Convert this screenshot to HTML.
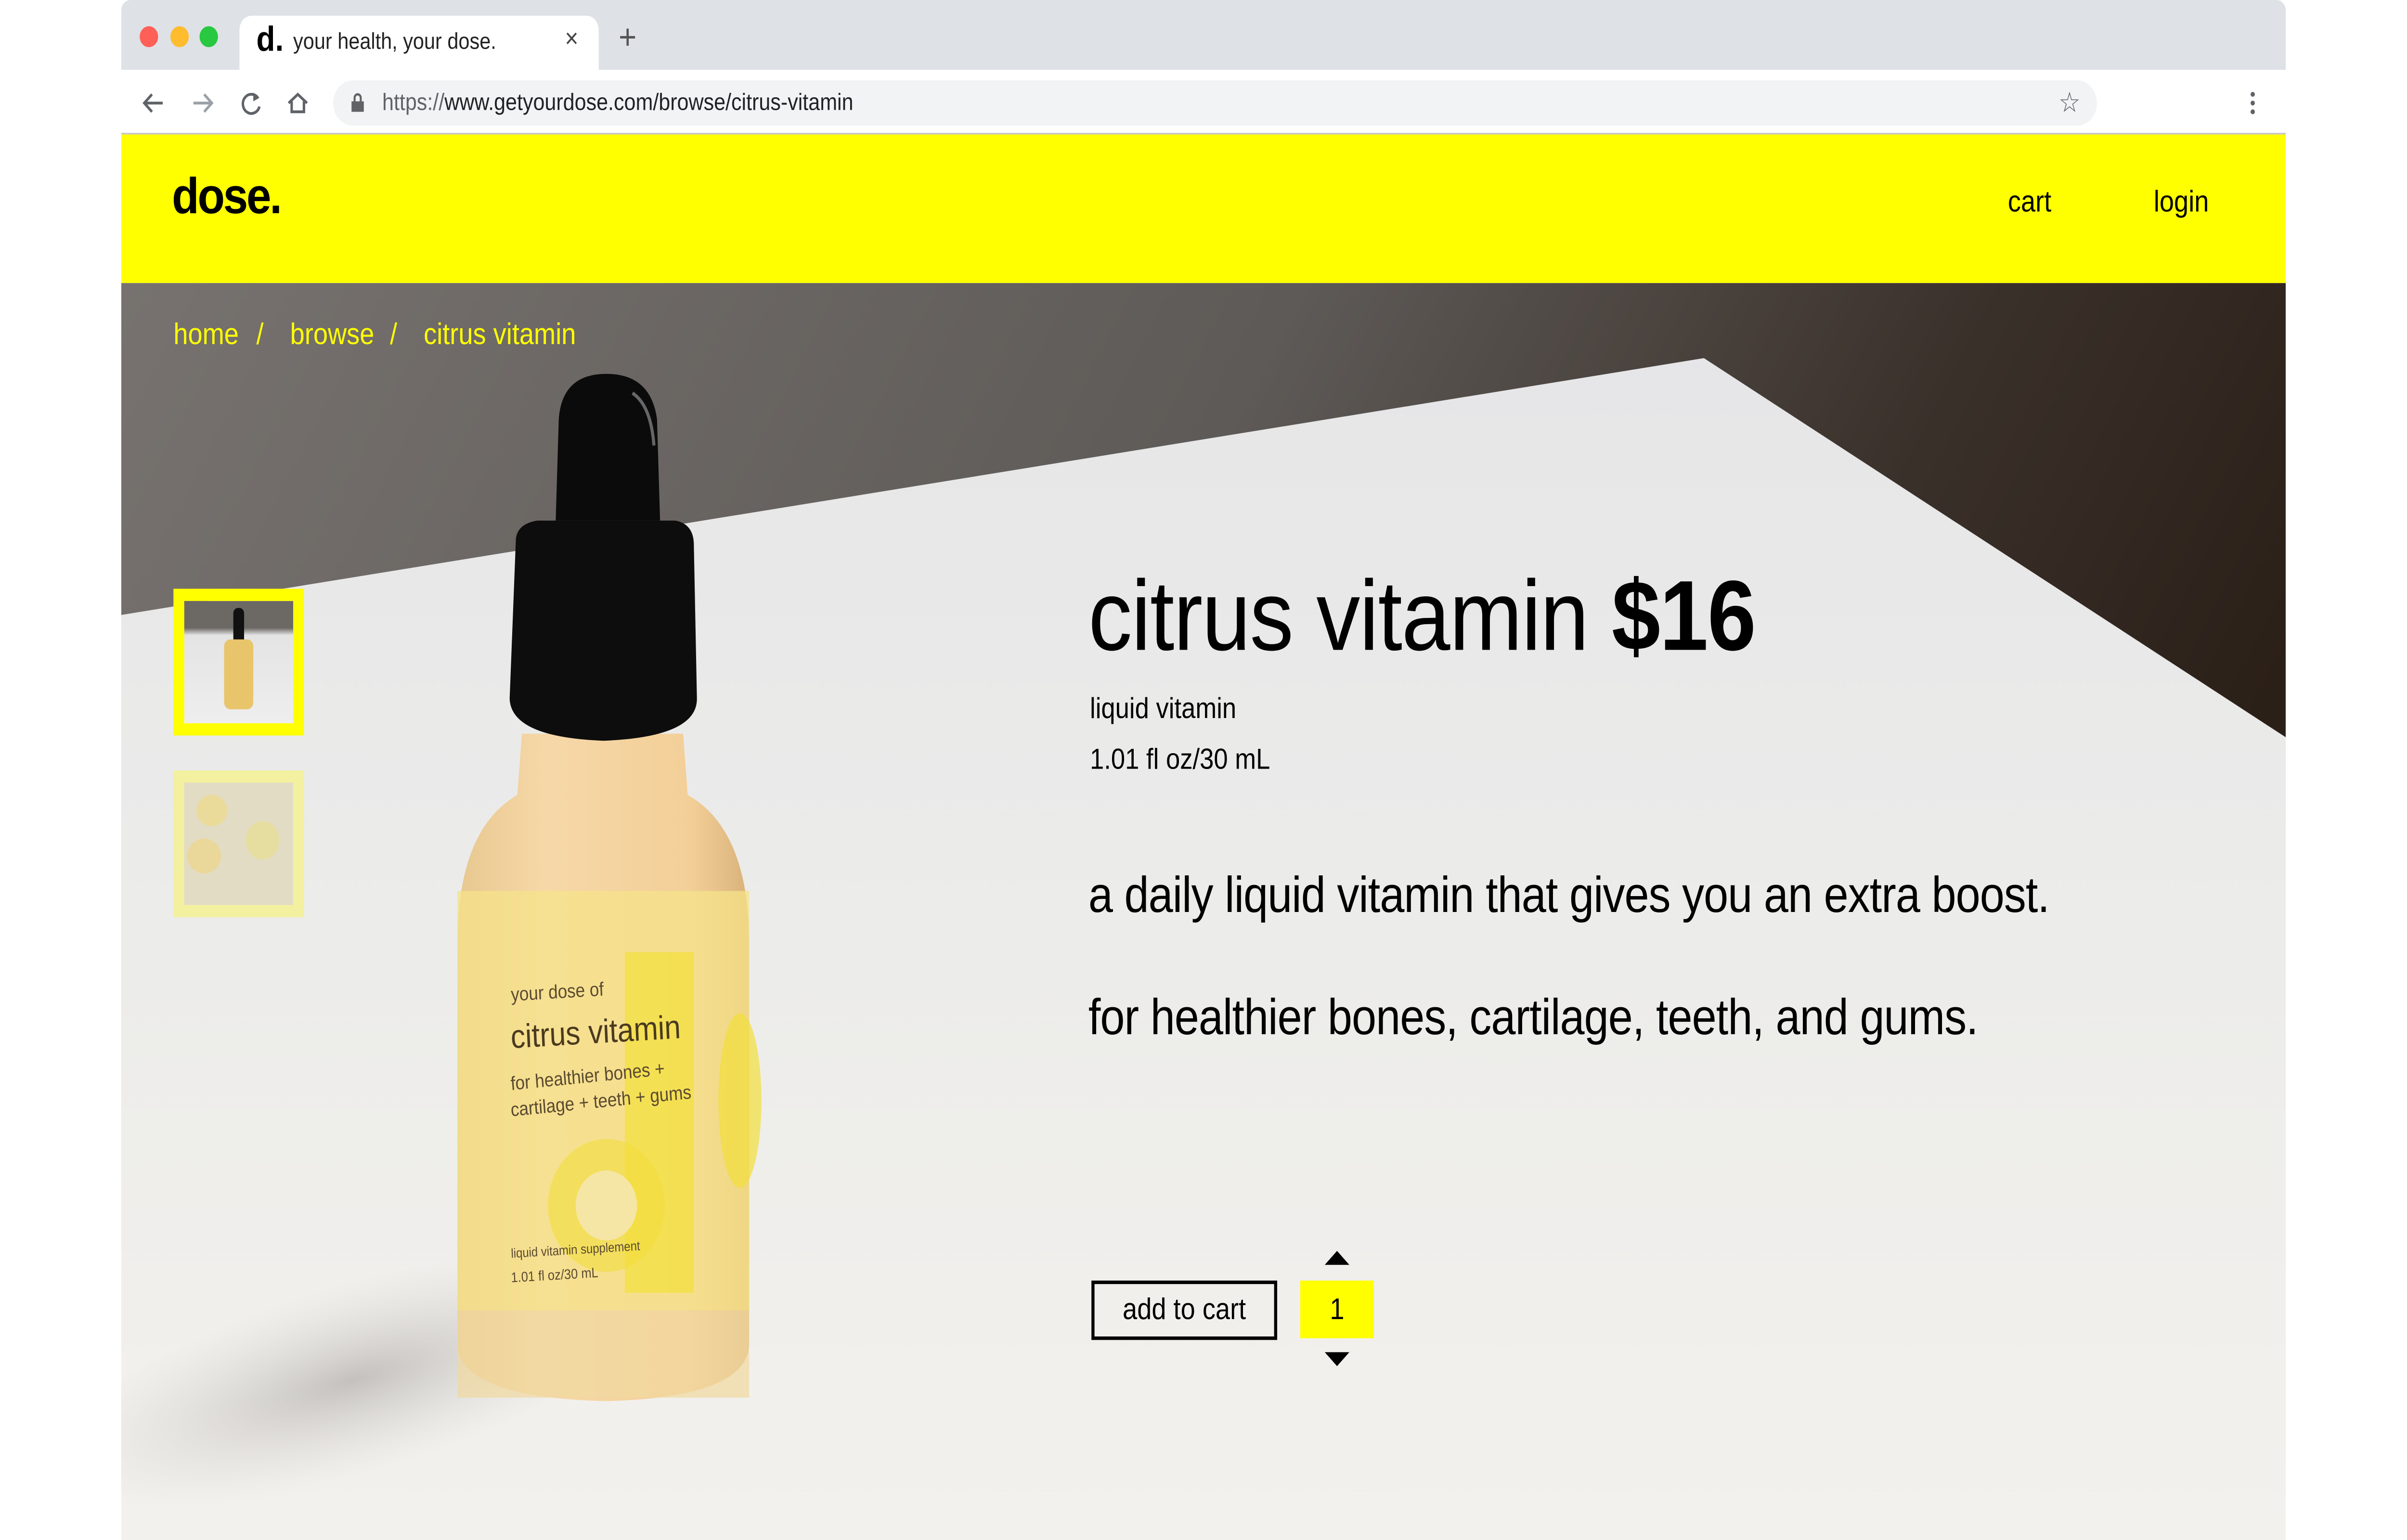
<!DOCTYPE html>
<html><head><meta charset="utf-8">
<style>
html,body{margin:0;padding:0;width:100%;height:100%;overflow:hidden;background:#fff;}
#s{position:absolute;left:0;top:0;width:1568px;height:881.5px;overflow:hidden;transform-origin:0 0;transform:scale(3.6301);font-family:"Liberation Sans",sans-serif;}
.a{position:absolute;white-space:nowrap;}
</style></head><body>
<div id="s">
  <div class="a" style="left:79px;top:0;width:1410px;height:40px;background:#dee1e6;border-radius:6px 6px 0 0;"></div>
  <div class="a" style="left:91px;top:15px;width:12px;height:12px;border-radius:50%;background:#fe5f57;"></div>
  <div class="a" style="left:111px;top:15px;width:12px;height:12px;border-radius:50%;background:#febc2e;"></div>
  <div class="a" style="left:130px;top:15px;width:12px;height:12px;border-radius:50%;background:#28c840;"></div>
  <div class="a" style="left:156px;top:9px;width:234px;height:31px;background:#fff;border-radius:8px 8px 0 0;"></div>
  <div class="a" style="left:167px;top:12px;font-size:20px;font-weight:bold;color:#000;">d.</div>
  <div class="a" style="left:191px;top:16px;font-size:13px;color:#222;">your health, your dose.</div>
  <div class="a" style="left:368px;top:14px;font-size:15px;color:#444;">×</div>
  <div class="a" style="left:403px;top:11px;font-size:20px;color:#555;">+</div>
  <div class="a" style="left:79px;top:40px;width:1410px;height:36px;background:#fff;"></div>
  <svg class="a" style="left:90px;top:50px" width="120" height="18" viewBox="0 0 120 18">
    <path d="M16 9H4M9 4L4 9l5 5" stroke="#5f6368" stroke-width="1.6" fill="none"/>
    <path d="M36 9h12M43 4l5 5-5 5" stroke="#9aa0a6" stroke-width="1.6" fill="none"/>
    <path d="M78 6a5.5 5.5 0 1 0 1 5" stroke="#5f6368" stroke-width="1.6" fill="none"/><path d="M75 3l4 3-4 2z" fill="#5f6368"/>
    <path d="M98 9l6-5 6 5M100 8v6h8v-6" stroke="#5f6368" stroke-width="1.6" fill="none"/>
  </svg>
  <div class="a" style="left:217px;top:46px;width:1149px;height:26px;background:#f1f3f4;border-radius:13px;"></div>
  <svg class="a" style="left:228px;top:53px" width="10" height="12"><rect x="1" y="5" width="8" height="6" fill="#5f6368"/><path d="M3 5V3a2 2 0 0 1 4 0v2" stroke="#5f6368" stroke-width="1.3" fill="none"/></svg>
  <div class="a" style="left:249px;top:51px;font-size:13.5px;color:#202124;"><span style="color:#5f6368">https://</span>www.getyourdose.com/browse/citrus-vitamin</div>
  <div class="a" style="left:1341px;top:49px;font-size:16px;color:#5f6368;">☆</div>
  <svg class="a" style="left:1465px;top:52px" width="5" height="14"><circle cx="2.5" cy="2" r="1.4" fill="#5f6368"/><circle cx="2.5" cy="7" r="1.4" fill="#5f6368"/><circle cx="2.5" cy="12" r="1.4" fill="#5f6368"/></svg>
  <div class="a" style="left:79px;top:76px;width:1410px;height:1px;background:#c8c8c8;"></div>
  <div class="a" style="left:79px;top:77px;width:1410px;height:85px;background:#ffff00;"></div>
  <div class="a" style="left:112px;top:97px;font-size:29px;font-weight:bold;color:#000;letter-spacing:-1px;">dose.</div>
  <div class="a" style="left:1308px;top:106px;font-size:17px;color:#000;">cart</div>
  <div class="a" style="left:1403px;top:106px;font-size:17px;color:#000;">login</div>
  <svg class="a" style="left:79px;top:162px" width="1410" height="720" viewBox="79 162 1410 720">
    <defs>
      <linearGradient id="bg" x1="0" y1="0" x2="1" y2="0.3"><stop offset="0" stop-color="#77726f"/><stop offset="0.5" stop-color="#5e5a57"/><stop offset="0.8" stop-color="#3a302a"/><stop offset="1" stop-color="#2b2018"/></linearGradient>
      <linearGradient id="tb" x1="0" y1="0" x2="0" y2="1"><stop offset="0" stop-color="#e6e6e8"/><stop offset="0.5" stop-color="#ececea"/><stop offset="1" stop-color="#f3f1ed"/></linearGradient>
      <radialGradient id="sh" cx="0.5" cy="0.5" r="0.5"><stop offset="0" stop-color="#b9b6b2" stop-opacity="0.8"/><stop offset="1" stop-color="#d8d6d2" stop-opacity="0"/></radialGradient>
      <linearGradient id="bt" x1="0" y1="0" x2="1" y2="0"><stop offset="0" stop-color="#e8c890"/><stop offset="0.3" stop-color="#f6d8a8"/><stop offset="0.8" stop-color="#f3cf98"/><stop offset="1" stop-color="#d9b27a"/></linearGradient>
    </defs>
    <rect x="79" y="162" width="1410" height="720" fill="url(#bg)"/>
    <polygon points="79,352 1110,205 1489,422 1489,882 79,882" fill="url(#tb)"/>
    <ellipse cx="230" cy="790" rx="200" ry="55" fill="url(#sh)" transform="rotate(-14 230 790)"/>
    <path d="M340 420 L445 420 L448 455 Q488 475 488 540 L488 770 Q486 800 395 802 Q300 800 298 770 L298 540 Q298 475 337 455 Z" fill="url(#bt)"/>
    <rect x="298" y="510" width="190" height="240" fill="#f6e38a" opacity="0.75"/>
    <rect x="407" y="545" width="45" height="195" fill="#f3df3a" opacity="0.7"/>
    <circle cx="395" cy="690" r="38" fill="#f2de3c" opacity="0.6"/><circle cx="395" cy="690" r="20" fill="#f5e6a6"/>
    <ellipse cx="482" cy="630" rx="14" ry="50" fill="#f2de3c" opacity="0.7"/>
    <rect x="298" y="750" width="190" height="50" fill="#f1d8a0" opacity="0.7"/>
    <path d="M336 310 Q336 300 350 298 L440 298 Q452 300 452 312 L454 400 Q454 422 393 424 Q333 422 332 400 Z" fill="#0d0d0d"/>
    <path d="M362 298 L364 240 Q366 214 395 214 Q424 214 428 240 L430 298 Z" fill="#0b0b0b"/>
    <path d="M412 225 Q424 232 426 255" stroke="#666" stroke-width="2" fill="none"/>
    <text x="333" y="573" font-size="11" fill="#5a4a30" transform="rotate(-3 333 573)" font-family="Liberation Sans,sans-serif">your dose of</text>
    <text x="333" y="600" font-size="19" fill="#4a3a20" transform="rotate(-3 333 600)" font-family="Liberation Sans,sans-serif">citrus vitamin</text>
    <text x="333" y="624" font-size="11" fill="#5a4a30" transform="rotate(-5 333 624)" font-family="Liberation Sans,sans-serif">for healthier bones +</text>
    <text x="333" y="639" font-size="11" fill="#5a4a30" transform="rotate(-5 333 639)" font-family="Liberation Sans,sans-serif">cartilage + teeth + gums</text>
    <text x="333" y="720" font-size="7.5" fill="#5a4a30" transform="rotate(-3 333 720)" font-family="Liberation Sans,sans-serif">liquid vitamin supplement</text>
    <text x="333" y="734" font-size="8" fill="#5a4a30" transform="rotate(-3 333 734)" font-family="Liberation Sans,sans-serif">1.01 fl oz/30 mL</text>
  </svg>
  <div class="a" style="left:113px;top:182px;font-size:17px;color:#ffff00;">home</div>
  <div class="a" style="left:167px;top:182px;font-size:17px;color:#ffff00;">/</div>
  <div class="a" style="left:189px;top:182px;font-size:17px;color:#ffff00;">browse</div>
  <div class="a" style="left:254px;top:182px;font-size:17px;color:#ffff00;">/</div>
  <div class="a" style="left:276px;top:182px;font-size:17px;color:#ffff00;">citrus vitamin</div>
  <div class="a" style="left:113px;top:337px;width:71px;height:70px;border:7px solid #ffff00;background:linear-gradient(180deg,#6c6864 0,#6c6864 22%,#e4e4e4 28%,#eee 100%);"></div>
  <div class="a" style="left:152px;top:348px;width:7px;height:20px;background:#111;border-radius:3px 3px 0 0;"></div>
  <div class="a" style="left:146px;top:366px;width:19px;height:40px;background:#e8c46a;border-radius:4px;"></div>
  <div class="a" style="left:113px;top:441px;width:71px;height:70px;border:7px solid #f3f1a0;background:#e2dcc4;"></div>
  <div class="a" style="left:128px;top:455px;width:20px;height:18px;border-radius:50%;background:#eadb9a;"></div>
  <div class="a" style="left:122px;top:480px;width:22px;height:20px;border-radius:50%;background:#ead79a;"></div>
  <div class="a" style="left:160px;top:470px;width:22px;height:22px;border-radius:50%;background:#e6dea0;"></div>
  <div class="a" style="left:709px;top:320px;font-size:57px;color:#000;letter-spacing:-0.5px;">citrus vitamin <b>$16</b></div>
  <div class="a" style="left:710px;top:397px;font-size:16.5px;color:#000;">liquid vitamin</div>
  <div class="a" style="left:710px;top:426px;font-size:16.5px;color:#000;">1.01 fl oz/30 mL</div>
  <div class="a" style="left:709px;top:497px;font-size:28.8px;color:#000;letter-spacing:-0.3px;">a daily liquid vitamin that gives you an extra boost.</div>
  <div class="a" style="left:709px;top:567px;font-size:28.8px;color:#000;letter-spacing:-0.3px;">for healthier bones, cartilage, teeth, and gums.</div>
  <div class="a" style="left:711px;top:733px;width:117px;height:30px;border:2px solid #000;font-size:17px;color:#000;text-align:center;line-height:30px;">add to cart</div>
  <div class="a" style="left:847px;top:733px;width:48px;height:33px;background:#ffff00;font-size:17px;color:#000;text-align:center;line-height:33px;">1</div>
  <svg class="a" style="left:862px;top:715px" width="18" height="70"><path d="M1 9L9 1l8 8z" fill="#000"/><path d="M1 59l8 8 8-8z" fill="#000"/></svg>
</div>
<script>
(function(){var w=window.innerWidth||document.documentElement.clientWidth,h=window.innerHeight||document.documentElement.clientHeight;if(w>0&&h>0){document.getElementById('s').style.transform='scale('+(w/1568)+','+(h/881.5)+')';}})();
</script>
</body></html>
